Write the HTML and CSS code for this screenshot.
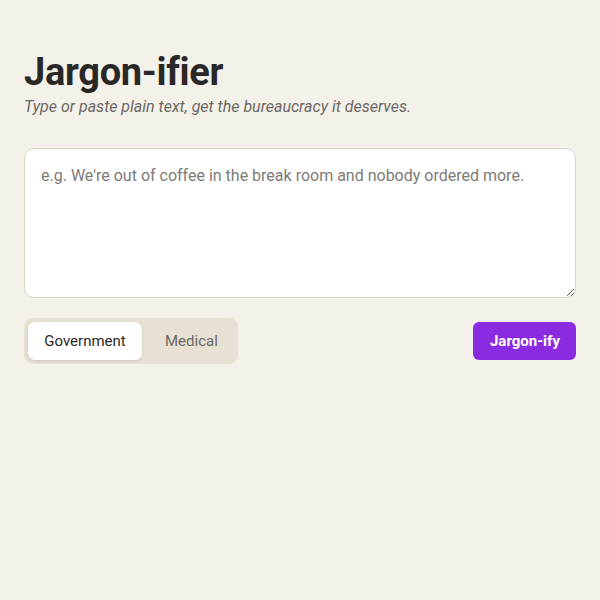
FILE: index.html
```html
<!DOCTYPE html>
<html>
<head>
<meta charset="utf-8">
<link rel="stylesheet" href="styles.css">
</head>
<body>
<main class="app">
  <h1 class="title">Jargon-ifier</h1>
  <p class="subtitle">Type or paste plain text, get the bureaucracy it deserves.</p>
  <textarea class="input" placeholder="e.g. We're out of coffee in the break room and nobody ordered more."></textarea>
  <div class="controls">
    <div class="toggle">
      <button class="seg active">Government</button>
      <button class="seg">Medical</button>
    </div>
    <button class="go">Jargon-ify</button>
  </div>
</main>
</body>
</html>
```
FILE: styles.css
```css
html, body {
  margin: 0;
  padding: 0;
  background: #f4f1ea;
  font-family: Roboto, "Liberation Sans", sans-serif;
  color: #2a2a2a;
}
.app {
  padding: 49px 24px 24px;
  display: flex;
  flex-direction: column;
}
.title {
  margin: 0;
  font-size: 38px;
  font-weight: 700;
  line-height: 47px;
  letter-spacing: -0.3px;
  color: #2a2826;
}
.subtitle {
  margin: 1px 0 0;
  font-size: 16px;
  font-style: italic;
  color: #6b6864;
  line-height: 20px;
}
.input {
  margin-top: 31px;
  height: 150px;
  box-sizing: border-box;
  border: 1px solid #d9d4c8;
  border-radius: 10px;
  background: #fff;
  padding: 17px 16px;
  font-family: Roboto, "Liberation Sans", sans-serif;
  font-size: 16px;
  line-height: 20px;
  color: #2a2a2a;
  outline: none;
  display: block;
}
.input::placeholder {
  color: #7d7b78;
}
.controls {
  margin-top: 20px;
  display: flex;
  justify-content: space-between;
  align-items: center;
}
.toggle {
  display: flex;
  background: #e7e1d4;
  border-radius: 9px;
  padding: 4px;
}
.seg {
  border: none;
  background: transparent;
  font-family: Roboto, "Liberation Sans", sans-serif;
  font-size: 15px;
  color: #6b6864;
  padding: 0 16px;
  height: 38px;
  border-radius: 7px;
  cursor: pointer;
}
.seg.active {
  background: #fff;
  color: #2a2a2a;
  box-shadow: 0 1px 3px rgba(0,0,0,0.12);
  min-width: 114px;
}
.seg:not(.active) {
  padding: 0 16px 0 23px;
}
.go {
  border: none;
  background: #8a2be2;
  color: #fff;
  font-family: Roboto, "Liberation Sans", sans-serif;
  font-size: 15px;
  font-weight: 700;
  height: 38px;
  padding: 0 16px 0 17px;
  border-radius: 6px;
  cursor: pointer;
}
```
